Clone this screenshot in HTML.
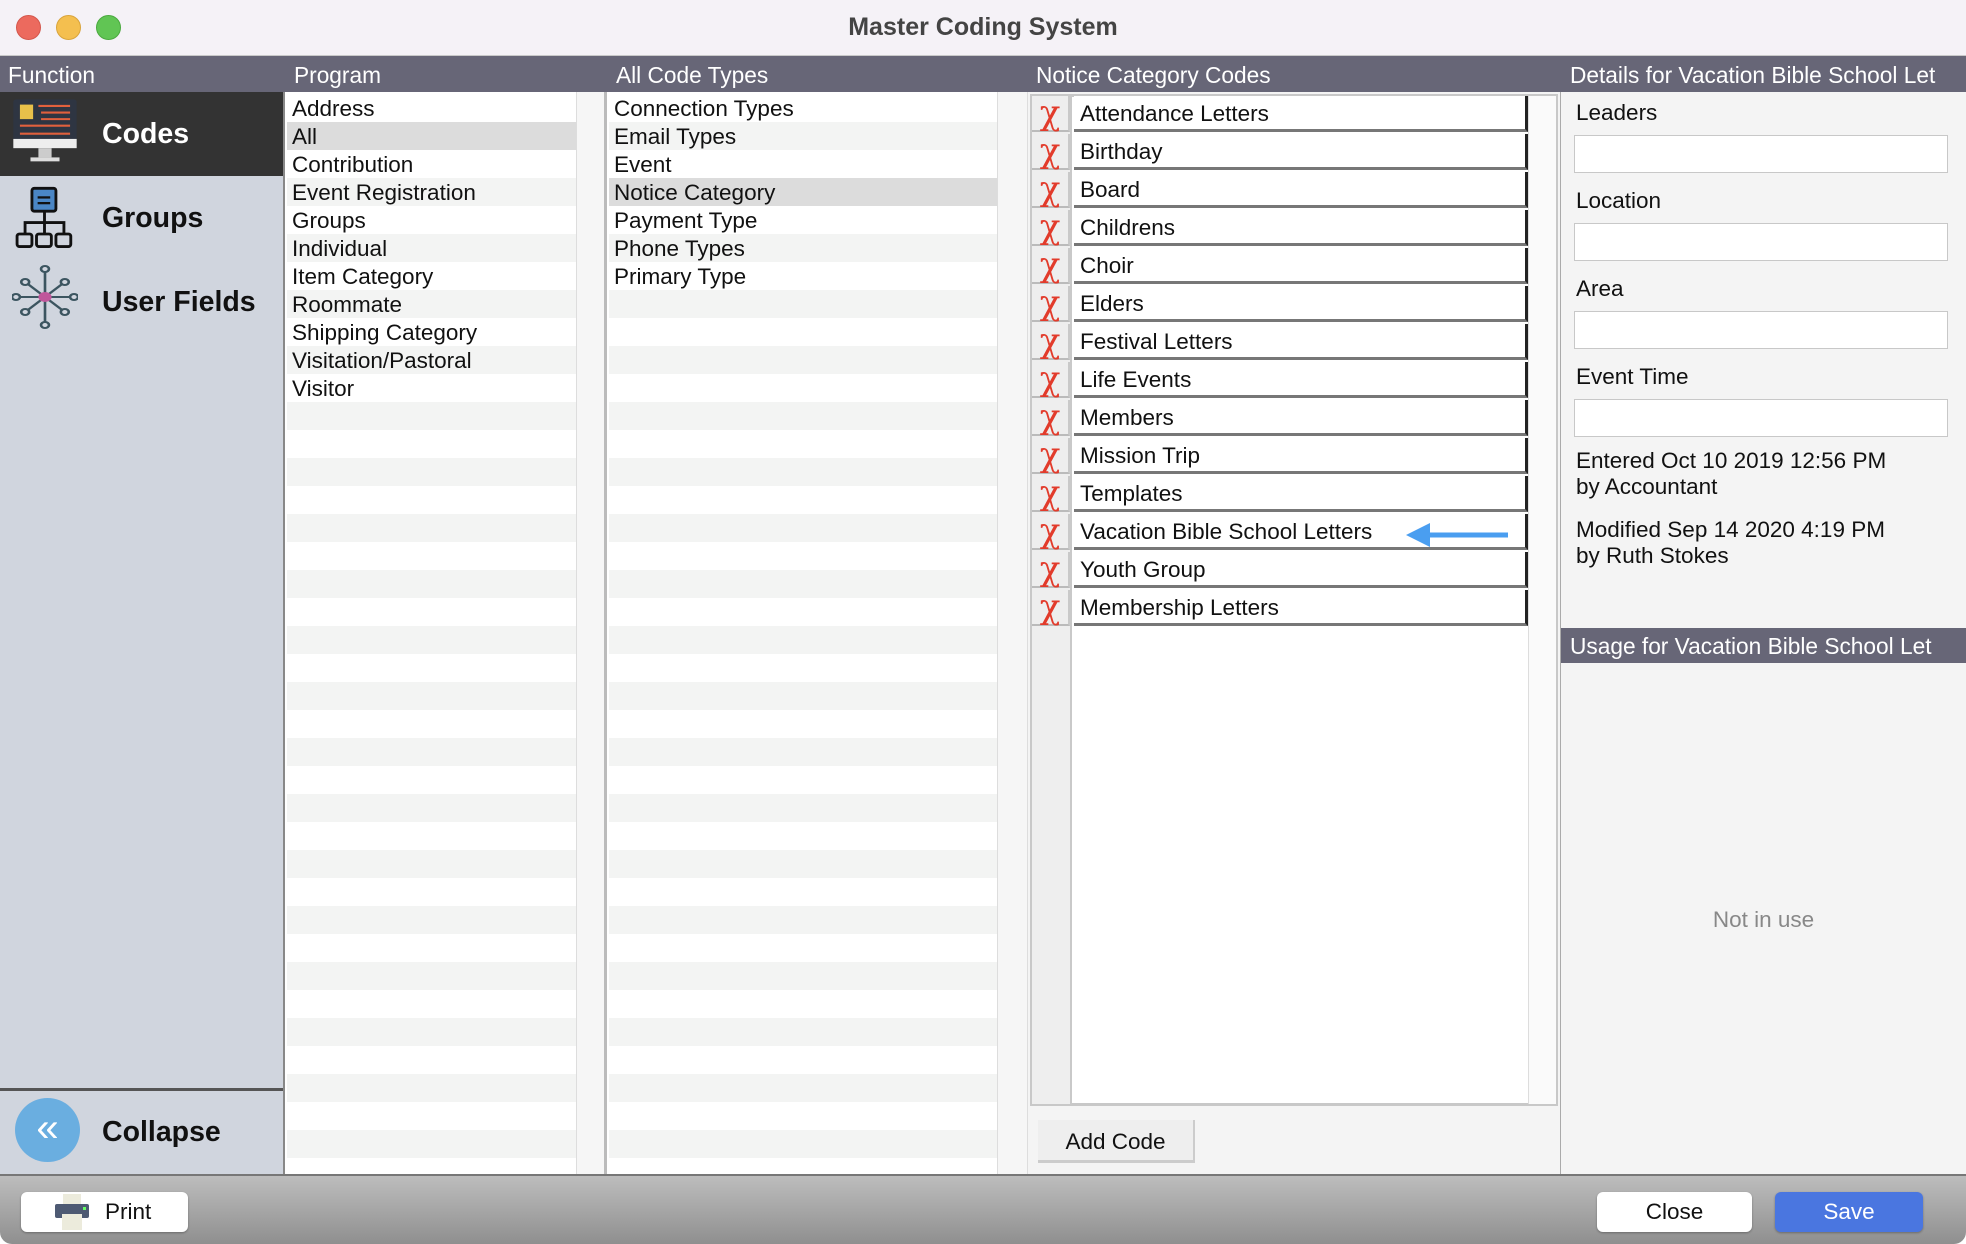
<!DOCTYPE html>
<html><head><meta charset="utf-8"><style>
*{box-sizing:border-box;margin:0;padding:0}
body{width:1966px;height:1244px;overflow:hidden;font-family:"Liberation Sans",sans-serif;background:#fff;position:relative;color:#111}
.a{position:absolute}
.title{left:0;top:0;width:1966px;height:56px;background:#f5f2f7;border-bottom:1px solid #c9c9c9;text-align:center;font-weight:bold;font-size:25px;line-height:54px;color:#444}
.dot{width:25px;height:25px;border-radius:50%;top:15px}
.hdr{top:56px;height:36px;left:0;width:1966px;background:#676677;color:#fff;font-size:22.7px;line-height:38px}
.hdr span{position:absolute;top:0}
.left{left:0;top:92px;width:285px;height:1082px;background:#d0d5de;border-right:2px solid #888}
.fn{position:absolute;left:0;width:283px;height:84px;font-weight:bold;font-size:28.5px;line-height:84px;padding-left:102px}
.list{top:94px;background:#fff}
.row{height:28px;font-size:22.5px;line-height:30px;padding-left:5px;white-space:nowrap}
.row:nth-child(even){background:#f3f4f3}
.sb{background:#f6f6f6;border-left:1px solid #ddd;border-right:1px solid #ddd}
.crow{position:absolute;left:1032px;width:494px;height:38px}
.cx{position:absolute;left:0;top:0;width:38px;height:36px;background:#eee;border-right:2px solid #c9c9c9;border-bottom:2px solid #bbb;color:#e23b2b;font-size:34px;text-align:center;line-height:34px;font-family:"DejaVu Serif",serif}
.ct{position:absolute;left:42px;top:0;width:454px;height:36px;background:#fff;border-bottom:3px solid #777;font-size:22.5px;line-height:36px;padding-left:6px;border-right:3px solid #222}
.lbl{left:1576px;font-size:22.5px}
.inp{left:1574px;width:374px;height:38px;background:#fff;border:1px solid #c8c8c8}
.btn{background:#fff;border-radius:6px;font-size:22.5px;text-align:center;line-height:40px;height:40px;top:1192px;box-shadow:0 1px 2px rgba(0,0,0,.3)}
</style></head><body>
<div class="a title">Master Coding System</div>
<div class="a dot" style="left:16px;background:#ec6a5e;border:1px solid #d4574c"></div>
<div class="a dot" style="left:56px;background:#f4bf4f;border:1px solid #d9a43b"></div>
<div class="a dot" style="left:96px;background:#61c554;border:1px solid #4aa93e"></div>

<div class="a hdr"><span style="left:8px">Function</span><span style="left:294px">Program</span><span style="left:616px">All Code Types</span><span style="left:1036px">Notice Category Codes</span><span style="left:1570px">Details for Vacation Bible School Let</span></div>

<div class="a left">
<div class="fn" style="top:0;background:#333;color:#fff">Codes</div>
<svg class="a" style="left:12px;top:8px" width="50" height="64" viewBox="0 0 50 64" transform="scale(1.3)" style="transform-origin:0 0"></svg>
<svg class="a" style="left:12px;top:6px" width="66" height="66" viewBox="0 0 50 50"><rect x="1" y="1" width="48" height="32" rx="2" fill="#2e3542"/><rect x="1" y="31" width="48" height="7" fill="#eee"/><rect x="20" y="38" width="10" height="7" fill="#ccc"/><rect x="14" y="45" width="22" height="3" fill="#ddd"/><rect x="6" y="5" width="10" height="11" fill="#e7c04a"/><g stroke="#e0603d" stroke-width="1.6"><line x1="20" y1="6" x2="44" y2="6"/><line x1="22" y1="11" x2="44" y2="11"/><line x1="22" y1="16" x2="44" y2="16"/><line x1="6" y1="21" x2="44" y2="21"/><line x1="6" y1="27" x2="44" y2="27"/></g></svg>
<div class="fn" style="top:84px">Groups</div>
<svg class="a" style="left:12px;top:94px" width="65" height="64" viewBox="0 0 50 56"><rect x="14" y="2" width="21" height="20" rx="2" fill="#4a86c5" stroke="#111" stroke-width="2.5"/><line x1="19" y1="10" x2="30" y2="10" stroke="#111" stroke-width="2"/><line x1="19" y1="15" x2="30" y2="15" stroke="#111" stroke-width="2"/><path d="M25 22V32M8 42V32H42V42M25 32V42" stroke="#111" stroke-width="2.5" fill="none"/><rect x="1" y="42" width="13" height="11" rx="2" fill="none" stroke="#111" stroke-width="2.5"/><rect x="18" y="42" width="13" height="11" rx="2" fill="none" stroke="#111" stroke-width="2.5"/><rect x="35" y="42" width="13" height="11" rx="2" fill="none" stroke="#111" stroke-width="2.5"/></svg>
<div class="fn" style="top:168px">User Fields</div>
<svg class="a" style="left:12px;top:172px" width="66" height="66" viewBox="0 0 50 66" preserveAspectRatio="none"><g stroke="#3c5560" stroke-width="2" fill="#d0d5de"><line x1="25" y1="5" x2="25" y2="61"/><line x1="3" y1="33" x2="47" y2="33"/><line x1="10" y1="18" x2="40" y2="48"/><line x1="40" y1="18" x2="10" y2="48"/><circle cx="25" cy="5" r="3"/><circle cx="25" cy="61" r="3"/><circle cx="3" cy="33" r="3"/><circle cx="47" cy="33" r="3"/><circle cx="10" cy="18" r="3"/><circle cx="40" cy="18" r="3"/><circle cx="10" cy="48" r="3"/><circle cx="40" cy="48" r="3"/></g><circle cx="25" cy="33" r="5" fill="#c0579b"/></svg>
<div class="a" style="left:0;top:996px;width:283px;height:3px;background:#555"></div>
<div class="a" style="left:15px;top:1006px;width:65px;height:64px;border-radius:50%;background:#6aaee0;color:#fff;font-size:40px;text-align:center;line-height:60px">«</div>
<div class="fn" style="top:998px">Collapse</div>
</div>

<div class="a list" style="left:287px;width:289px;height:1080px">
<div class="row">Address</div><div class="row" style="background:#dcdcdc">All</div><div class="row">Contribution</div><div class="row">Event Registration</div><div class="row">Groups</div><div class="row">Individual</div><div class="row">Item Category</div><div class="row">Roommate</div><div class="row">Shipping Category</div><div class="row">Visitation/Pastoral</div><div class="row">Visitor</div>
<div class="row"></div><div class="row"></div><div class="row"></div><div class="row"></div><div class="row"></div><div class="row"></div><div class="row"></div><div class="row"></div><div class="row"></div><div class="row"></div><div class="row"></div><div class="row"></div><div class="row"></div><div class="row"></div><div class="row"></div><div class="row"></div><div class="row"></div><div class="row"></div><div class="row"></div><div class="row"></div><div class="row"></div><div class="row"></div><div class="row"></div><div class="row"></div><div class="row"></div><div class="row"></div><div class="row"></div>
</div>
<div class="a sb" style="left:576px;top:92px;width:31px;height:1082px;border-right:3px solid #bbb"></div>

<div class="a list" style="left:609px;width:388px;height:1080px">
<div class="row">Connection Types</div><div class="row">Email Types</div><div class="row">Event</div><div class="row" style="background:#dcdcdc">Notice Category</div><div class="row">Payment Type</div><div class="row">Phone Types</div><div class="row">Primary Type</div>
<div class="row"></div><div class="row"></div><div class="row"></div><div class="row"></div><div class="row"></div><div class="row"></div><div class="row"></div><div class="row"></div><div class="row"></div><div class="row"></div><div class="row"></div><div class="row"></div><div class="row"></div><div class="row"></div><div class="row"></div><div class="row"></div><div class="row"></div><div class="row"></div><div class="row"></div><div class="row"></div><div class="row"></div><div class="row"></div><div class="row"></div><div class="row"></div><div class="row"></div><div class="row"></div><div class="row"></div><div class="row"></div><div class="row"></div><div class="row"></div><div class="row"></div>
</div>
<div class="a sb" style="left:997px;top:92px;width:31px;height:1082px"></div>

<div class="a" style="left:1028px;top:92px;width:533px;height:1082px;background:#f4f4f4;border-right:1px solid #aaa"></div>
<div class="a" style="left:1030px;top:94px;width:528px;height:1012px;background:#fff;border:3px solid #c8c8c8"></div>
<div class="a" style="left:1032px;top:96px;width:40px;height:1008px;background:#eee;border-right:2px solid #c9c9c9"></div>
<div class="a" style="left:1528px;top:96px;width:28px;height:1008px;background:#fafafa;border-left:1px solid #ddd"></div>
<div class="crow" style="top:96px"><div class="cx">χ</div><div class="ct">Attendance Letters</div></div>
<div class="crow" style="top:134px"><div class="cx">χ</div><div class="ct">Birthday</div></div>
<div class="crow" style="top:172px"><div class="cx">χ</div><div class="ct">Board</div></div>
<div class="crow" style="top:210px"><div class="cx">χ</div><div class="ct">Childrens</div></div>
<div class="crow" style="top:248px"><div class="cx">χ</div><div class="ct">Choir</div></div>
<div class="crow" style="top:286px"><div class="cx">χ</div><div class="ct">Elders</div></div>
<div class="crow" style="top:324px"><div class="cx">χ</div><div class="ct">Festival Letters</div></div>
<div class="crow" style="top:362px"><div class="cx">χ</div><div class="ct">Life Events</div></div>
<div class="crow" style="top:400px"><div class="cx">χ</div><div class="ct">Members</div></div>
<div class="crow" style="top:438px"><div class="cx">χ</div><div class="ct">Mission Trip</div></div>
<div class="crow" style="top:476px"><div class="cx">χ</div><div class="ct">Templates</div></div>
<div class="crow" style="top:514px"><div class="cx">χ</div><div class="ct">Vacation Bible School Letters</div></div>
<div class="crow" style="top:552px"><div class="cx">χ</div><div class="ct">Youth Group</div></div>
<div class="crow" style="top:590px"><div class="cx">χ</div><div class="ct">Membership Letters</div></div>
<svg class="a" style="left:1404px;top:522px" width="106" height="26" viewBox="0 0 106 26"><path d="M104 13H22" stroke="#4a9ef0" stroke-width="5"/><path d="M2 13L26 1V25Z" fill="#4a9ef0"/></svg>
<div class="a" style="left:1038px;top:1120px;width:157px;height:43px;background:#eee;border-bottom:3px solid #ccc;border-right:2px solid #ccc;font-size:22.5px;text-align:center;line-height:44px">Add Code</div>

<div class="a" style="left:1561px;top:92px;width:405px;height:1082px;background:#f4f4f4"></div>
<div class="a lbl" style="top:100px">Leaders</div><div class="a inp" style="top:135px"></div>
<div class="a lbl" style="top:188px">Location</div><div class="a inp" style="top:223px"></div>
<div class="a lbl" style="top:276px">Area</div><div class="a inp" style="top:311px"></div>
<div class="a lbl" style="top:364px">Event Time</div><div class="a inp" style="top:399px"></div>
<div class="a lbl" style="top:448px;line-height:26px">Entered Oct 10 2019 12:56 PM<br>by Accountant</div>
<div class="a lbl" style="top:517px;line-height:26px">Modified Sep 14 2020 4:19 PM<br>by Ruth Stokes</div>
<div class="a" style="left:1561px;top:628px;width:405px;height:35px;background:#676677;color:#fff;font-size:22.7px;line-height:37px;padding-left:9px">Usage for Vacation Bible School Let</div>
<div class="a" style="left:1561px;top:907px;width:405px;text-align:center;font-size:22.5px;color:#888">Not in use</div>

<div class="a" style="left:0;top:1174px;width:1966px;height:70px;background:linear-gradient(#bdbdbd,#8f8f8f);border-top:2px solid #777;border-radius:0 0 12px 12px"></div>
<div class="a btn" style="left:21px;width:167px;text-align:left;padding-left:84px">Print</div>
<svg class="a" style="left:55px;top:1194px" width="34" height="36" viewBox="0 0 34 36"><rect x="8" y="0" width="18" height="10" fill="#ecebdc"/><rect x="0" y="10" width="34" height="14" rx="2" fill="#4e5a73"/><rect x="7" y="20" width="20" height="16" fill="#ecebdc"/><rect x="28" y="13" width="3" height="3" fill="#6f6"/></svg>
<div class="a btn" style="left:1597px;width:155px">Close</div>
<div class="a btn" style="left:1775px;width:148px;background:#4a76e0;color:#fff">Save</div>
</body></html>
